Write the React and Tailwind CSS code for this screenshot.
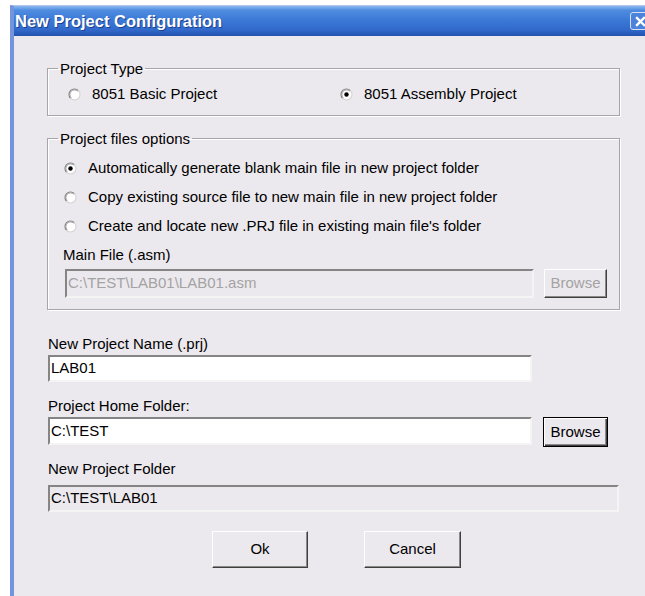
import { useState } from 'react';

function Radio({ checked }) {
  return (
    <svg width="13" height="13" viewBox="0 0 13 13" className="shrink-0">
      <circle cx="6.5" cy="6.5" r="5.5" fill="#fff" />
      <path d="M2.6 10.4A5.5 5.5 0 0 1 10.4 2.6" fill="none" stroke="#7a7a7a" strokeWidth="1.1" />
      <path d="M10.4 2.6A5.5 5.5 0 0 1 2.6 10.4" fill="none" stroke="#d2d2d2" strokeWidth="1.1" />
      <path d="M3.3 9.7A4.5 4.5 0 0 1 9.7 3.3" fill="none" stroke="#a9a9a9" strokeWidth="1" />
      {checked && <circle cx="6.5" cy="6.5" r="2.2" fill="#000" />}
    </svg>
  );
}

function Option({ checked, onSelect, className = '', children }) {
  return (
    <div className={`flex h-[17px] cursor-default items-center gap-[11px] ${className}`} onClick={onSelect}>
      <Radio checked={checked} />
      <span className="whitespace-nowrap">{children}</span>
    </div>
  );
}

function GroupBox({ title, className = '', children }) {
  return (
    <fieldset
      className={`border border-[#a6a5aa] shadow-[inset_1px_1px_0_#fff,1px_1px_0_#fff] ${className}`}
    >
      <legend className="ml-[10px] px-[2px] leading-[17px]">{title}</legend>
      {children}
    </fieldset>
  );
}

function TextBox({ value, disabled, className = '' }) {
  return (
    <div
      className={`flex items-center overflow-hidden whitespace-nowrap border-2 border-t-[#858585] border-l-[#858585] border-r-[#f4f4f4] border-b-[#f4f4f4] pl-[1px] ${
        disabled ? 'bg-[#ece9ee] text-[#a3a3a3]' : 'bg-white text-black'
      } ${className}`}
    >
      {value}
    </div>
  );
}

function Button({ children, isDefault, disabled, className = '' }) {
  const edge = isDefault
    ? 'border border-black shadow-[inset_1px_1px_0_#fff,inset_-1px_-1px_0_#404040,inset_-2px_-2px_0_#8a8a8a]'
    : 'border border-t-white border-l-white border-r-[#404040] border-b-[#404040] shadow-[inset_-1px_-1px_0_#8a8a8a]';
  return (
    <button
      type="button"
      className={`flex items-center justify-center bg-[#ece9ee] ${edge} ${
        disabled ? 'text-[#a3a3a3]' : 'text-black'
      } ${className}`}
    >
      {children}
    </button>
  );
}

export default function App() {
  const [kind, setKind] = useState('asm');
  const [fileMode, setFileMode] = useState('blank');

  return (
    <div className="h-[596px] w-[645px] overflow-hidden bg-white font-['Liberation_Sans',Arial,sans-serif] text-[15px] text-black">
      <div className="ml-[10px] mt-[5px] h-[600px] w-[660px] border-l-4 border-t border-l-[#7494dc] border-t-[#b4c4e6] bg-[#ece9ee]">
        <div className="flex h-[30px] items-center bg-[linear-gradient(to_bottom,#8cb9f2_0%,#4f8ce0_14%,#3c7ad7_45%,#3169cb_80%,#2452ae_100%)] pl-[1px]">
          <span className="text-[16.5px] font-bold text-white [text-shadow:1px_1px_0_#1d408f]">
            New Project Configuration
          </span>
          <div className="flex-1" />
          <div className="mr-[19px] flex h-[18px] w-[21px] items-center justify-center rounded-[3px] border border-[#d6e0f4] bg-[#4a82dc]">
            <svg width="11" height="11" viewBox="0 0 11 11">
              <path d="M2 2l7 7M9 2l-7 7" stroke="#fff" strokeWidth="2.4" strokeLinecap="square" />
            </svg>
          </div>
        </div>

        <GroupBox title="Project Type" className="ml-[33px] mt-[24px] w-[573px] pb-[12px]">
          <div className="flex pl-[20px] pt-[9px]">
            <Option className="w-[272px]" checked={kind === 'basic'} onSelect={() => setKind('basic')}>
              8051 Basic Project
            </Option>
            <Option checked={kind === 'asm'} onSelect={() => setKind('asm')}>
              8051 Assembly Project
            </Option>
          </div>
        </GroupBox>

        <GroupBox title="Project files options" className="ml-[33px] mt-[14px] w-[573px] pb-[11px]">
          <div className="flex flex-col gap-[12px] pl-[16px] pt-[13px]">
            <Option checked={fileMode === 'blank'} onSelect={() => setFileMode('blank')}>
              Automatically generate blank main file in new project folder
            </Option>
            <Option checked={fileMode === 'copy'} onSelect={() => setFileMode('copy')}>
              Copy existing source file to new main file in new project folder
            </Option>
            <Option checked={fileMode === 'locate'} onSelect={() => setFileMode('locate')}>
              Create and locate new .PRJ file in existing main file's folder
            </Option>
          </div>
          <div className="mt-[11px] pl-[15px] leading-[17px]">Main File (.asm)</div>
          <div className="mt-[6px] flex items-center pl-[17px]">
            <TextBox disabled value={'C:\\TEST\\LAB01\\LAB01.asm'} className="h-[29px] w-[469px]" />
            <Button disabled className="ml-[10px] h-[29px] w-[63px]">
              Browse
            </Button>
          </div>
        </GroupBox>

        <div className="pl-[34px]">
          <div className="mt-[25px] leading-[17px]">New Project Name (.prj)</div>
          <TextBox value="LAB01" className="mt-[3px] h-[27px] w-[484px]" />

          <div className="mt-[15px] leading-[17px]">Project Home Folder:</div>
          <div className="mt-[3px] flex h-[30px] items-start">
            <TextBox value={'C:\\TEST'} className="h-[28px] w-[484px]" />
            <Button isDefault className="ml-[11px] h-[30px] w-[65px]">
              Browse
            </Button>
          </div>

          <div className="mt-[13px] leading-[17px]">New Project Folder</div>
          <TextBox disabled value={'C:\\TEST\\LAB01'} className="mt-[8px] h-[27px] w-[571px] !text-black" />

          <div className="mt-[19px] flex gap-[56px] pl-[164px]">
            <Button className="h-[37px] w-[96px]">Ok</Button>
            <Button className="h-[37px] w-[97px]">Cancel</Button>
          </div>
        </div>
      </div>
    </div>
  );
}
